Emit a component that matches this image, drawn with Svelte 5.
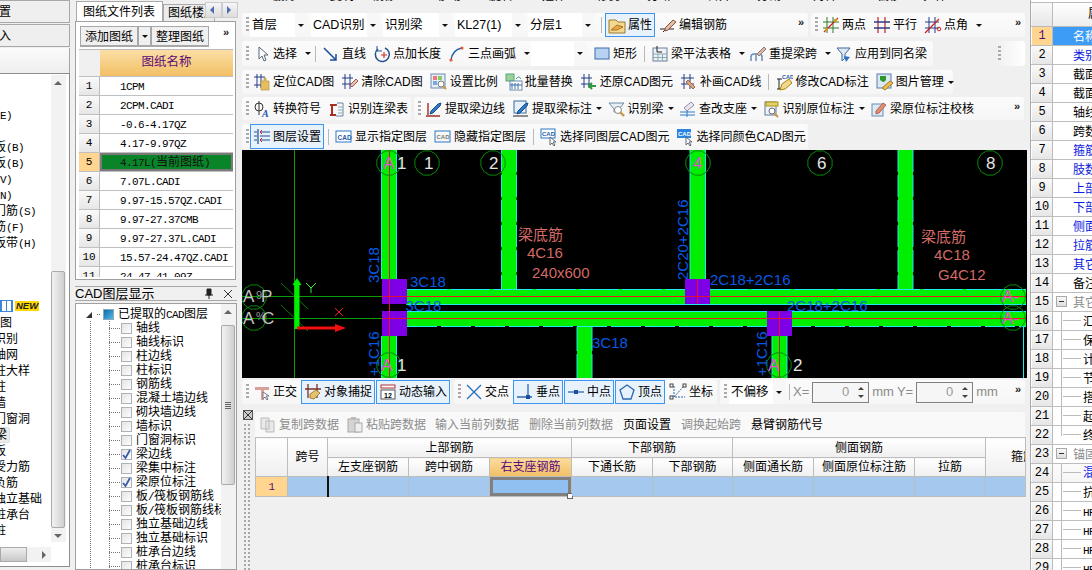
<script>
  const icons = {
    pick: `<path d="M6 2v12l3-3 2 5 2-1-2-5h4z" fill="#fff" stroke="#567"/>`,
    line: `<path d="M2 3l12 12M14 9v6H8" fill="none" stroke="#1b4f9c" stroke-width="1.5"/>`,
    plus: `<path d="M12 3a7 7 0 1 1-7 1" fill="none" stroke="#23508c" stroke-width="1.5"/><path d="M4 1v5h5" fill="none" stroke="#23508c"/><path d="M11 7v6M8 10h6" stroke="#c33" stroke-width="1.2"/>`,
    arc: `<path d="M3 15C4 8 8 4 14 3" fill="none" stroke="#1b5ea8" stroke-width="1.4"/><circle cx="3" cy="15" r="1.6" fill="#e25a3a"/><circle cx="14" cy="3" r="1.6" fill="#e25a3a"/>`,
    rect: `<rect x="2" y="3" width="14" height="11" fill="#b8d2f2" stroke="#3a6ab0"/>`,
    table: `<rect x="2" y="3" width="14" height="13" fill="#eef2f8" stroke="#6a7f9c"/><path d="M2 9h14M2 12.500h14M7 9v7M11.500 9v7" stroke="#8aa" /><path d="M6 1v6h5" fill="none" stroke="#222"/>`,
    reb: `<path d="M2 16v-4q0-3 3-3h5q3 0 3 3v4M7 9v7" fill="none" stroke="#6a8cb8" stroke-width="1.5"/><path d="M8 9l7-7 2 2-7 7z" fill="#d8b8a0" stroke="#977"/>`,
    funnel: `<path d="M2 3h13l-5 6v4l-3 3V9z" fill="#dfe8f4" stroke="#3a6a9c"/><path d="M9 11l6 1-4 5z" fill="#2f72c4"/>`,
    locate: `<path d="M4 1v14M8 1v14M1 4h11M1 12h11" stroke="#233a86" fill="none"/><path d="M8 8h3V5h2v3h3v9H8z" fill="#e3bf62" stroke="#b08a30" stroke-width=".6"/>`,
    clear: `<path d="M4 1v15M9 1v15M1 5h11M1 11h11" stroke="#233a86" fill="none"/><path d="M9 12l6-6 2 2-6 6z" fill="#e0c4b0" stroke="#a55"/>`,
    scale: `<rect x="1" y="1" width="14" height="14" fill="#e7eff8" stroke="#6e8bb0"/><rect x="3" y="3" width="4" height="4" fill="#e77"/><rect x="8" y="3" width="4" height="4" fill="#8c6"/><rect x="3" y="8" width="4" height="4" fill="#7ad"/><circle cx="11" cy="11" r="3" fill="#fff" stroke="#777"/><path d="M13 13l3 3" stroke="#c8964a" stroke-width="2"/>`,
    batch: `<rect x="1" y="1" width="8" height="7" fill="#9bd09b" stroke="#5a7"/><rect x="5" y="8" width="12" height="9" fill="#fff" stroke="#6a87a8"/><path d="M7 10v6M10 10v6M13 10v6M5 12h12" stroke="#3a70a8"/><path d="M11 6q3-4 5 0" fill="none" stroke="#3a7"/>`,
    restore: `<path d="M4 1v14M9 1v14M1 5h11M1 11h11" stroke="#233a86" fill="none"/><path d="M16 13H9m3-3l-3 3 3 3" fill="none" stroke="#2a9a3a" stroke-width="2"/>`,
    patch: `<path d="M4 1v15M10 1v15M1 5h13M1 11h13" stroke="#233a86" fill="none"/><path d="M8 7l7 7-2 2-7-7z" fill="#d8a878" stroke="#a65"/>`,
    modify: `<path d="M2 6h5M2 16h5M4 6v10" stroke="#222"/><path d="M5 17l2-6 7-5 3 4-7 6z" fill="#f0d890" stroke="#a80"/><text x="7" y="5.500" font-size="5.500" font-weight="bold" fill="#1f5aa8" font-family="Liberation Sans">CAD</text>`,
    photo: `<rect x="1" y="1" width="14" height="14" fill="#dbe8f6" stroke="#5b7ea8"/><path d="M4 3h6v4l-2 2-1 0-3-2z" fill="#2a9a2a"/><path d="M6 15l8-7 3 2-8 7z" fill="#e8c050" stroke="#a87a20"/>`,
    phi: `<circle cx="6" cy="7" r="4" fill="none" stroke="#333"/><path d="M6 1v14" stroke="#333"/><text x="9" y="17" font-size="10" font-style="italic" font-weight="bold" fill="#2456a8" font-family="Liberation Serif">A</text>`,
    lien: `<path d="M2 5h7M4 5v10M2 15h8" stroke="#a43020" stroke-width="2" fill="none"/><path d="M9 3h6v13H8" fill="#f4f7fb" stroke="#6a83a4"/><path d="M10 7h4M10 10h4M10 13h4" stroke="#8aa"/>`,
    extr: `<path d="M1 16h14M3 15V3" stroke="#a03028" stroke-width="1.4"/><path d="M6 11l7-7 3-1-1 3-7 7-3 1z" fill="#2f79c9" stroke="#1b4f8f"/>`,
    extm: `<rect x="2" y="1" width="12" height="12" fill="#e7eff8" stroke="#3a6a9c"/><path d="M1 16h15" stroke="#222"/><path d="M6 11l7-7 3-1-1 3-7 7-3 1z" fill="#2f79c9" stroke="#1b4f8f"/>`,
    iden: `<path d="M1 3h15l-5 6v3H6V9z" fill="#e7eef6" stroke="#6f8ca8"/><circle cx="10" cy="10" r="3.500" fill="#fff" stroke="#888"/><path d="M12 12l4 4" stroke="#c8964a" stroke-width="2.400"/>`,
    supp: `<path d="M1 12h15M1 15h15M8 10v7" stroke="#2c7cc8"/><path d="M5 8l7-6 3 3-7 6z" fill="#e6e8ee" stroke="#98a"/>`,
    orig: `<rect x="2" y="2" width="11" height="13" fill="#eef3f9" stroke="#5e7b9e"/><rect x="3" y="2" width="12" height="4" fill="#e2d070" stroke="#a90"/><circle cx="9" cy="11" r="3" fill="#fff" stroke="#667"/><path d="M11 13l4 4" stroke="#c8964a" stroke-width="2"/>`,
    check: `<rect x="2" y="4" width="11" height="12" fill="#dfe9f5" stroke="#6d8bb0"/><path d="M6 11l7-8 3 2-7 8-3 1z" fill="#e28f70" stroke="#a65"/>`,
    layer: `<path d="M5 1v15M1 4h3M1 8h3M1 12h3M7 4h10M7 8h10M7 12h10" stroke="#1f4c8c" fill="none" stroke-width="1.2"/><path d="M9 2l-2 2 2 2M9 10l-2 2 2 2" stroke="#c22" fill="none"/>`,
    show: `<rect x="1" y="3" width="15" height="11" fill="#fff" stroke="#2a7ac6"/><text x="2.500" y="11.500" font-size="6.500" font-weight="bold" fill="#1f5aa8" font-family="Liberation Sans">CAD</text>`,
    hide: `<rect x="1" y="3" width="15" height="11" fill="#f7f7f7" stroke="#2a7ac6"/><text x="2.500" y="11" font-size="6" fill="#777" font-weight="bold" font-family="Liberation Sans">CAD</text>`,
    samel: `<rect x="1" y="1" width="14" height="9" fill="#fff" stroke="#2a7ac6"/><text x="2" y="8" font-size="6" font-weight="bold" fill="#1f5aa8" font-family="Liberation Sans">CAD</text><path d="M10 9v8l2-2 2 3 1-1-2-3h3z" fill="#fff" stroke="#667"/>`,
    samec: `<rect x="1" y="1" width="14" height="9" fill="#2a86e0"/><text x="2" y="8" font-size="6" font-weight="bold" fill="#fff" font-family="Liberation Sans">CAD</text><path d="M10 9v8l2-2 2 3 1-1-2-3h3z" fill="#fff" stroke="#667"/>`,
    prop: `<path d="M1 4h7l2 2h7v11H1z" fill="#f4d890" stroke="#9a7a30"/><path d="M3 14l6-5 6 2-6 3z" fill="#e8a848" stroke="#a87420"/>`,
    edit: `<path d="M1 13h5M10 13h5M4 16q2-3 5-3" fill="none" stroke="#222"/><path d="M6 12l8-8 3 2-8 8-3 1z" fill="#e3b9a0" stroke="#854"/>`,
    two: `<path d="M5 1v16M11 1v16M1 6h16M1 12h16" stroke="#2f7a2f"/><path d="M2 16L16 2" stroke="#c22" stroke-width="1.200"/><rect x="3" y="12" width="3" height="3" fill="#c8a020"/><rect x="12" y="3" width="3" height="3" fill="#c8a020"/>`,
    para: `<path d="M5 1v16M12 1v16" stroke="#c83232" stroke-width="1.300"/><path d="M1 6h16M1 12h16" stroke="#2a3f86" stroke-width="1.300"/>`,
    ang: `<path d="M5 1v16M11 1v16M1 6h14M1 12h14" stroke="#233a86"/><path d="M1 17L15 3" stroke="#c22" stroke-width="1.200"/><circle cx="15" cy="13" r="1.800" fill="none" stroke="#c22"/>`,
    ortho: `<path d="M2 4h14v3H11v10H8V7H2z" fill="#d9a09a"/><path d="M10 9v7l2-2 2 3 1-1-2-3h3z" fill="#fff" stroke="#778"/>`,
    snap: `<path d="M4 1v14M13 1v14M1 6h16" stroke="#7a3020" stroke-width="1.300"/><path d="M6 11l6-4 4 3-6 6-4-1z" fill="#e3c370" stroke="#a88030"/>`,
    dyn: `<rect x="2" y="2" width="14" height="3" fill="#fff" stroke="#a33"/><rect x="2" y="7" width="14" height="9" fill="#fff" stroke="#555"/><text x="5" y="14.500" font-size="7" font-family="Liberation Sans" font-weight="bold">12</text>`,
    cross: `<path d="M2 2l14 14M16 2L2 16" stroke="#2170c0" stroke-width="1.300"/>`,
    perp: `<path d="M12 1v13M1 14h15" stroke="#2a68b0" stroke-width="1.300"/><rect x="10" y="12" width="4" height="4" fill="#1a4f98"/>`,
    mid: `<path d="M1 9h16" stroke="#2a68b0" stroke-width="1.300"/><rect x="7" y="7" width="4" height="4" fill="#1a4f98"/>`,
    apex: `<path d="M9 2l7 5-3 9H5L2 7z" fill="none" stroke="#2a68b0" stroke-width="1.300"/>`,
    coord: `<path d="M5 3v11h11" stroke="#2a68b0" fill="none" stroke-dasharray="2 1"/><path d="M5 14L15 3" stroke="#2a68b0" stroke-dasharray="2 1"/><rect x="1" y="1" width="3" height="3" fill="none" stroke="#444"/><rect x="14" y="1" width="3" height="3" fill="none" stroke="#444"/><rect x="1" y="13" width="3" height="3" fill="none" stroke="#444"/>`,
    copy: `<path d="M2 2h8v11H2zM7 5h8v11H7z" fill="#e8e8e8" stroke="#bbb"/>`,
    paste: `<rect x="2" y="3" width="11" height="13" fill="#d4d4d4" stroke="#aaa"/><rect x="9" y="7" width="7" height="9" fill="#eee" stroke="#aaa"/><rect x="5" y="1" width="5" height="3" fill="#bbb"/>`
  };

  const it = (i, l, a) => ({ i, l, a });
  const on = (i, l) => ({ i, l, on: true });
  const sep = { sep: true };
  const more = { more: true };
  const combo = (combo, w) => ({ combo, w });

  const rows = [
    [
      { w: 566, items: [combo('首层', 58), combo('CAD识别', 69), combo('识别梁', 69), combo('KL27(1)', 70), combo('分层1', 67), sep, on('prop', '属性'), it('edit', '编辑钢筋'), more] },
      { w: 214, items: [it('two', '两点'), it('para', '平行'), it('ang', '点角', 1), more] }
    ],
    [
      { w: 691, items: [it('pick', '选择', 1), sep, it('line', '直线'), it('plus', '点加长度'), it('arc', '三点画弧', 1), combo('', 56), it('rect', '矩形'), sep, it('table', '梁平法表格', 1), it('reb', '重提梁跨', 1), it('funnel', '应用到同名梁')] },
      { w: 31, push: 58, items: [] }
    ],
    [
      { w: 711, items: [it('locate', '定位CAD图'), it('clear', '清除CAD图'), it('scale', '设置比例'), it('batch', '批量替换'), it('restore', '还原CAD图元'), it('patch', '补画CAD线'), sep, it('modify', '修改CAD标注'), it('photo', '图片管理', 2)] }
    ],
    [
      { w: 169, items: [it('phi', '转换符号'), it('lien', '识别连梁表')] },
      { w: 610, items: [it('extr', '提取梁边线'), it('extm', '提取梁标注', 2), it('iden', '识别梁', 2), it('supp', '查改支座', 2), it('orig', '识别原位标注', 2), it('check', '梁原位标注校核'), more] }
    ],
    [
      { w: 566, items: [on('layer', '图层设置'), sep, it('show', '显示指定图层'), it('hide', '隐藏指定图层'), sep, it('samel', '选择同图层CAD图元'), it('samec', '选择同颜色CAD图元')] }
    ]
  ];

  const snapA = [it('ortho', '正交'), on('snap', '对象捕捉'), on('dyn', '动态输入')];
  const snapB = [it('cross', '交点'), on('perp', '垂点'), on('mid', '中点'), on('apex', '顶点'), it('coord', '坐标')];

  const clipped = [
    ['删除', 273], ['复制', 330], ['镜像', 372], ['移动', 437], ['旋转', 489], ['延伸', 542],
    ['修剪', 597], ['打断', 647], ['合并', 707], ['分割', 757], ['对齐', 813], ['偏移', 877], ['拉伸', 923]
  ];

  const leftA = ['(E)', '', '板(B)', '板(B)', '(V)', '(N)', '门筋(S)', '筋(F)', '板带(H)'];
  const leftB = ['识别', '轴网', '柱大样', '柱', '墙', '门窗洞', '梁', '板', '受力筋', '负筋', '独立基础', '桩承台', '桩'];

  const sheets = ['1CPM', '2CPM.CADI', '-0.6-4.17QZ', '4.17-9.97QZ', '4.17L(当前图纸)', '7.07L.CADI', '9.97-15.57QZ.CADI', '9.97-27.37CMB', '9.97-27.37L.CADI', '15.57-24.47QZ.CADI', '24.47-41.09Z'];
  const layers = [
    ['轴线'], ['轴线标识'], ['柱边线'], ['柱标识'], ['钢筋线'], ['混凝土墙边线'], ['砌块墙边线'], ['墙标识'], ['门窗洞标识'],
    ['梁边线', 1], ['梁集中标注'], ['梁原位标注', 1], ['板/筏板钢筋线'], ['板/筏板钢筋线标识'], ['独立基础边线'], ['独立基础标识'], ['桩承台边线'], ['桩承台标识']
  ];
  const props = [
    ['名称属性', 'sel'], ['类别', 'b'], ['截面宽度', ''], ['截面高度', ''], ['轴线距', ''], ['跨数量', ''], ['箍筋', 'b'], ['肢数', 'b'],
    ['上部通长', 'b'], ['下部通长', 'b'], ['侧面构造', 'b'], ['拉筋', 'b'], ['其它箍筋', 'b'], ['备注', ''],
    ['其它属性', 'g'], ['汇总信息', 't'], ['保护层', 't'], ['计算设置', 't'], ['节点设置', 't'], ['搭接设置', 't'], ['起点标高', 't'], ['终点标高', 't'],
    ['锚固搭接', 'g'], ['混凝土', 'tb'], ['抗震等级', 't'], ['HPB235', 't'], ['HRB335', 't'], ['HRB400', 't'], ['HPB300', 't']
  ];

  const split = (s) => s.split(/([\x00-\x7f]+)/).filter(Boolean).map((t) => ({ t, m: /^[\x00-\x7f]/.test(t) }));

  const oct = (cx, cy, r = 12.500) =>
    Array.from({ length: 12 }, (_, i) => {
      const a = ((i + 0.5) * Math.PI) / 6;
      return `${(cx + r * Math.cos(a)).toFixed(1)},${(cy + r * Math.sin(a)).toFixed(1)}`;
    }).join(' ');
  const rings = [[389, 163], [427, 163], [493, 163], [698, 163], [820, 163], [990, 163], [389, 365], [779, 365], [254, 297], [254, 318], [1013, 297], [1013, 318]];
  const greens = [
    [381.500, 150, 15, 129], [381.500, 336, 15, 42], [501.500, 150, 15, 140], [577, 326, 15, 52],
    [690, 150, 15, 129], [772, 336, 15, 42], [898, 150, 15, 140], [406, 289, 620, 16], [406, 311, 620, 15]
  ];
  const purples = [[382, 279], [382, 311], [685, 279], [767, 311]];
  const blues = [
    ['3C18', 410, 287], ['3C18', 405.500, 311], ['3C18', 592, 348], ['2C18+2C16', 710, 285], ['2C18+2C16', 787, 311]
  ];
  const vblues = [['3C18', 379, 283], ['+1C16', 379, 376], ['2C20+2C16', 688, 280], ['+1C16', 767, 376]];
  const pinks = [['梁底筋', 518, 240], ['4C16', 527, 258], ['240x600', 532, 278], ['梁底筋', 921, 242], ['4C18', 934, 260], ['G4C12', 938, 280]];
  const whites = [['1', 424, 169], ['2', 489, 169], ['6', 817, 169], ['8', 986, 169], ['1', 397, 169], ['1', 397, 371], ['2', 793, 371]];
  const mags = [['A', 383, 169], ['A', 381, 371], ['4', 693, 169], ['A', 768, 371], ['A-', 1002, 302], ['A-', 1002, 324]];
</script>

{#snippet txt(s)}
  {#each split(s) as p}{#if p.m}<span class="m">{p.t}</span>{:else}{p.t}{/if}{/each}
{/snippet}

{#snippet ico(name)}
  <svg class="ico" viewBox="0 0 18 18" width="18" height="18">{@html icons[name]}</svg>
{/snippet}

{#snippet tool(t)}
  {#if t.sep}
    <span class="sep"></span>
  {:else if t.more}
    <span class="more">»</span>
  {:else if t.combo !== undefined}
    <span class="combo" style="width:{t.w}px"><span class="cv">{t.combo}</span><span class="cb"><i class="caret"></i></span></span>
  {:else}
    <span class="tool" class:on={t.on}>
      {@render ico(t.i)}<span>{t.l}</span>{#if t.a}<i class="caret c{t.a}"></i>{/if}
    </span>
  {/if}
{/snippet}

<div class="app">
  <aside class="nav">
    <div class="navbtn"><span class="nb">设置</span></div>
    <div class="navbtn"><span class="nb">导入</span></div>
    <div class="navblank"></div>
    <div class="navtree">
      <div class="navlist">
        <div class="gapA"></div>
        {#each leftA as l}<div class="nl">{#if l}<span class="off">{@render txt(l)}</span>{/if}</div>{/each}
        <div class="gapB"></div>
        <div class="nl new"><span class="flat"></span><span class="newtag">NEW</span></div>
        <div class="nl"><span>图</span></div>
        {#each leftB as l, i}<div class="nl"><span class="off" class:sel={i === 6}>{l}</span></div>{/each}
      </div>
      <div class="vbar">
        <span class="arr up"></span>
        <span class="thumb nthumb"></span>
        <span class="arr dn"></span>
      </div>
      <div class="hbar"><span class="hthumb"></span><span class="arr rt"></span></div>
    </div>
  </aside>

  <section class="draw">
    <div class="tabs">
      <span class="tab act">图纸文件列表</span>
      <span class="tab two">图纸楼层构件</span>
      <span class="navs"><b class="lt"></b><b class="rt2"></b></span>
    </div>
    <div class="sheetbox">
      <div class="sheettool">
        <span class="stb">添加图纸</span><span class="stc"><i class="caret"></i></span><span class="stb">整理图纸</span>
        <span class="more">»</span>
      </div>
      <div class="sheethead"><span class="corner"></span><span class="shname">图纸名称</span></div>
      <div class="sheetbody">
        {#each sheets as s, i}
          <div class="sr" class:cur={i === 4}>
            <span class="sn">{i + 1}</span>
            <span class="st"><span class="stx">{@render txt(s)}</span></span>
          </div>
        {/each}
      </div>
    </div>

    <div class="ltitle"><span class="lt1">CAD图层显示</span>
      <svg class="pin" viewBox="0 0 10 12" width="10" height="12"><path d="M3 1h4v6H3zM1 7h8M5 7v4" fill="#222" stroke="#222"/></svg>
      <svg class="xx" viewBox="0 0 10 10" width="10" height="10"><path d="M1 1l8 8M9 1L1 9" stroke="#333"/></svg>
    </div>
    <div class="ltree">
      <div class="llist">
        <div class="lroot">
          <i class="tri"></i><span class="dots"></span><span class="rootbox"></span><span>已提取的<span class="m">CAD</span>图层</span>
        </div>
        {#each layers as [n, c]}
          <div class="ln">
            <span class="lcb">{#if c}<svg viewBox="0 0 11 11" width="11" height="11"><path d="M2 6l2.500 3L9 1" fill="none" stroke="#3a5aa8" stroke-width="1.800"/></svg>{/if}</span>
            <span class="ltx">{@render txt(n)}</span>
          </div>
        {/each}
      </div>
      <div class="vbar lbar">
        <span class="arr up"></span>
        <span class="thumb lthumb"><span class="lines"></span></span>
      </div>
    </div>
  </section>

  <main class="main">
    <div class="cliprow">
      {#each clipped as [l, x], i}
        <span class="ct" style="left:{x - 242}px">{l}</span>
      {/each}
    </div>

    <div class="bars">
      {#each rows as row, ri}
        <div class="row r{ri + 1}">
          {#each row as tb}
            <div class="tb" class:empty={tb.items.length === 0} style="width:{tb.w}px;margin-left:{tb.push ?? 0}px">
              <span class="grip"></span>
              {#each tb.items as t}{@render tool(t)}{/each}
            </div>
          {/each}
        </div>
      {/each}
    </div>

    <svg class="cad" viewBox="242 150 785 228" width="785" height="228">
      <rect x="242" y="150" width="785" height="228" fill="#000" />
      <line x1="294.500" y1="150" x2="294.500" y2="378" stroke="#0a9a0a" />
      <path d="M242 296.500H1026M242 318.500H1026" stroke="#0a9a0a" />
      {#each greens as [x, y, w, h]}<rect {x} {y} width={w} height={h} fill="#00ee00" />{/each}
      <g stroke="#22e8f0" fill="none">
        <path d="M381.500 150V279M396.500 150V279M381.500 336V378M396.500 336V378" />
        <path d="M501.500 150V289M516.500 150V289" stroke-dasharray="22 3" />
        <path d="M577 327V378M592 327V378" stroke-dasharray="24 3" />
        <path d="M690 150V279M705.500 150V279M772 336V378M787 336V378" />
        <path d="M898 150V289M913 150V289" stroke-dasharray="22 3" />
        <path d="M407 289.500H1026" stroke-dasharray="40 3" />
        <path d="M407 304.500H1026M407 311.500H1026" />
        <path d="M407 326.500H1026" stroke-dasharray="30 4" />
        <path d="M1023.500 326V378" />
      </g>
      <path d="M407 296.500H1026M407 318.500H1026" stroke="#f01818" />
      <path d="M389.500 150V378M779.500 336V378" stroke="#c02020" />
      {#each purples as [x, y]}<rect {x} {y} width="25" height="25" fill="#7d00e6" />{/each}
      <path d="M389.500 279V336M697.500 279V304M779.500 311V336M382 296.500H407M382 318.500H407M685 296.500H710M767 318.500H792" stroke="#e01030" />
      <path d="M281 283l27 26M281 305l27 26" stroke="#0a7a0a" />
      {#each rings as [x, y]}<polygon points={oct(x, y)} fill="none" stroke="#0a8a0a" />{/each}
      <path d="M297 329V283" stroke="#00ee00" stroke-width="5" />
      <path d="M292.500 285L297 278l4.500 7z" fill="#00ee00" />
      <path d="M297 328H336" stroke="#f01010" stroke-width="3" />
      <path d="M335 324l11 4-11 4z" fill="#f01010" />
      <path d="M306 283l5 5 5-5M311 288v5" stroke="#33ee33" fill="none" />
      <path d="M335 308l8 8M343 308l-8 8" stroke="#ee2020" />
      <g class="cadtext">
        {#each blues as [t, x, y]}<text {x} {y} fill="#0a58e0">{t}</text>{/each}
        {#each vblues as [t, x, y]}<text {x} {y} fill="#0a58e0" transform="rotate(-90 {x} {y})">{t}</text>{/each}
        {#each pinks as [t, x, y]}<text {x} {y} fill="#d26a66">{t}</text>{/each}
        {#each whites as [t, x, y]}<text {x} {y} fill="#e4e4e4" class="big">{t}</text>{/each}
        {#each mags as [t, x, y]}<text {x} {y} fill="#e050d0" class="big">{t}</text>{/each}
        <text x="243" y="302" fill="#c4c4c4" class="big">A</text>
        <text x="256" y="299" fill="#9a9a9a" class="tiny">9</text>
        <text x="261" y="302" fill="#c4c4c4" class="big">P</text>
        <text x="243" y="324" fill="#c4c4c4" class="big">A</text>
        <text x="256" y="320" fill="#9a9a9a" class="tiny">%</text>
        <text x="262" y="324" fill="#c4c4c4" class="big">C</text>
      </g>
    </svg>

    <div class="snap">
      <div class="tb sa"><span class="grip"></span>{#each snapA as t}{@render tool(t)}{/each}</div>
      <div class="tb sb"><span class="grip"></span>{#each snapB as t}{@render tool(t)}{/each}</div>
      <div class="tb sc">
        <span class="grip"></span>
        <span class="combo cw"><span class="cv">不偏移</span><span class="cb"><i class="caret"></i></span></span>
        <span class="sep"></span>
        <span class="gr xl">X=</span>
        <span class="spin"><span class="sv">0</span><span class="ud"><i class="up2"></i><i class="dn2"></i></span></span>
        <span class="gr mm">mm</span>
        <span class="gr yl">Y=</span>
        <span class="spin"><span class="sv">0</span><span class="ud"><i class="up2"></i><i class="dn2"></i></span></span>
        <span class="gr mm">mm</span>
        <span class="more">»</span>
      </div>
    </div>

    <div class="lower">
      <div class="gutter">
        <svg viewBox="0 0 10 10" width="10" height="10"><rect x=".5" y=".5" width="9" height="9" fill="#ccc" stroke="#555"/><path d="M1 1l8 8M9 1L1 9" stroke="#333"/></svg>
        <span class="gdots"></span>
      </div>
      <div class="gridwrap">
        <div class="lowtool">
          <span class="lt-i dim">{@render ico('copy')}复制跨数据</span>
          <span class="lt-i dim">{@render ico('paste')}粘贴跨数据</span>
          <span class="lt-t dim">输入当前列数据</span>
          <span class="lt-t dim">删除当前列数据</span>
          <span class="lt-t">页面设置</span>
          <span class="lt-t dim">调换起始跨</span>
          <span class="lt-t">悬臂钢筋代号</span>
        </div>
        <table class="grid">
          <colgroup>
            <col style="width:32px"><col style="width:40px"><col style="width:81px"><col style="width:81px"><col style="width:82px"><col style="width:81px"><col style="width:80px"><col style="width:81px"><col style="width:101px"><col style="width:71px"><col style="width:40px">
          </colgroup>
          <thead>
            <tr>
              <th rowspan="2"></th>
              <th rowspan="2">跨号</th>
              <th colspan="3">上部钢筋</th>
              <th colspan="2">下部钢筋</th>
              <th colspan="3">侧面钢筋</th>
              <th rowspan="2" class="clip"><span class="clipin">箍筋</span></th>
            </tr>
            <tr class="h2">
              <th>左支座钢筋</th><th>跨中钢筋</th><th class="hot">右支座钢筋</th><th>下通长筋</th><th>下部钢筋</th><th>侧面通长筋</th><th>侧面原位标注筋</th><th>拉筋</th>
            </tr>
          </thead>
          <tbody>
            <tr>
              <td class="num"><span class="m">1</span></td>
              <td class="d"></td>
              <td class="d caretcell"></td>
              <td class="d"></td>
              <td class="d cursor"><span class="handle"></span></td>
              <td class="d"></td><td class="d"></td><td class="d"></td><td class="d"></td><td class="d"></td><td class="d"></td>
            </tr>
          </tbody>
        </table>
      </div>
    </div>
  </main>

  <aside class="props">
    <div class="ph"><span class="pn"></span><span class="phc">属性名称</span></div>
    {#each props as [l, k], i}
      <div class="pr">
        <span class="pn" class:pnsel={i === 0}>{i + 1}</span>
        <span class="pc {k}">
          {#if k === 'g'}<span class="minus"></span>{/if}
          {#if k === 't' || k === 'tb'}<span class="tl" class:tend={i === 21}></span>{/if}
          <span class="pt">{@render txt(l)}</span>
        </span>
      </div>
    {/each}
  </aside>
</div>

<style>
  :global(body) { margin: 0; background: #f0f0f0; }
  .app {
    width: 1092px; height: 570px; overflow: hidden;
    display: grid; grid-template-columns: 75px 167px 788px 62px;
    font: 12px/14px "Liberation Sans", "Noto Sans CJK SC", sans-serif; color: #000; background: #f0f0f0;
  }
  .m { font-family: "Liberation Mono", monospace; font-size: 11px; letter-spacing: -0.6px; }

  /* left navigation */
  .nav { width: 70px; height: 570px; display: flex; flex-direction: column; overflow: hidden; }
  .navbtn { height: 21px; margin-bottom: 1px; border: 1px solid #a8a8a8; border-left: 0; background: #efefef; display: flex; align-items: center; overflow: hidden; }
  .nb { margin-left: -13px; }
  .navblank { height: 25px; background: linear-gradient(#fbfbfb, #eeeeee); border-right: 1px solid #a8a8a8; }
  .navtree { position: relative; height: 492px; border: 1px solid #8e8e8e; border-left: 0; background: #fff; }
  .navlist { width: 51px; height: 472px; overflow: hidden; }
  .gapA { height: 33px; }
  .gapB { height: 45px; }
  .nl { height: 16px; line-height: 16px; white-space: nowrap; display: flex; align-items: center; }
  .off { margin-left: -6px; }
  .off.sel { background: #ececec; border: 1px solid #ddd; border-radius: 2px; padding-right: 2px; line-height: 14px; }
  .nl.new { height: 19px; }
  .flat { width: 13px; height: 12px; background: repeating-linear-gradient(90deg, #3b88d8 0 1px, #fff 1px 5px); border: 1px solid #3b88d8; box-sizing: border-box; }
  .newtag { font: bold italic 9.500px/10px "Liberation Sans", sans-serif; background: #ffd800; color: #222; margin-left: 2px; padding: 0 1px; }
  .vbar { position: absolute; left: 51px; top: 1px; width: 15px; bottom: 24px; background: #f2f2f2; }
  .arr { position: absolute; width: 0; height: 0; border: 4px solid transparent; }
  .arr.up { top: 6px; left: 3px; border-bottom-color: #666; border-top: 0; }
  .arr.dn { bottom: 4px; left: 3px; border-top-color: #666; border-bottom: 0; }
  .arr.rt { right: 5px; top: 4px; border-left-color: #666; border-right: 0; }
  .thumb { position: absolute; left: 0; width: 14px; box-sizing: border-box; border: 1px solid #aaa; border-radius: 2px; background: linear-gradient(90deg, #f2f2f2, #cfcfcf); }
  .nthumb { top: 196px; height: 257px; }
  .hbar { position: absolute; left: 0; width: 51px; bottom: 4px; height: 15px; background: #f2f2f2; }
  .hthumb { display: block; width: 27px; height: 15px; box-sizing: border-box; border: 1px solid #aaa; background: linear-gradient(#eee, #c8c8c8); }

  /* drawing list + layers */
  .draw { width: 163px; height: 570px; display: flex; flex-direction: column; overflow: hidden; }
  .tabs { height: 21px; position: relative; display: flex; align-items: flex-end; white-space: nowrap; overflow: hidden; padding-left: 1px; }
  .tab { box-sizing: border-box; height: 20px; line-height: 20px; padding: 0 6px; border: 1px solid #aaa; border-bottom: 0; }
  .tab.act { background: #fff; width: 87px; z-index: 1; height: 20px; }
  .tab.two { width: 52px; height: 17px; line-height: 17px; background: #ececec; overflow: hidden; padding-left: 4px; }
  .navs { position: absolute; left: 130px; top: 2px; width: 33px; height: 16px; background: #f0f0f0; display: flex; }
  .navs b { flex: 1; background: linear-gradient(#f6f6f6, #dcdcdc); border: 1px solid #ccc; position: relative; }
  .lt::after, .rt2::after { content: ""; position: absolute; top: 3px; left: 4px; border: 4px solid transparent; }
  .lt::after { border-right-color: #4a6fb0; border-left: 0; }
  .rt2::after { border-left-color: #4a6fb0; border-right: 0; }
  .sheetbox { width: 161px; height: 259px; box-sizing: border-box; border: 1px solid #a0a0a0; background: #fff; overflow: hidden; }
  .sheettool { height: 27px; padding: 4px 0 0 4px; box-sizing: border-box; display: flex; background: #fff; }
  .stb, .stc { height: 21px; line-height: 20px; box-sizing: border-box; border: 1px solid #a8a8a8; border-bottom-width: 2px; background: #f0f0f0; }
  .stb { padding: 0 4px; }
  .stc { width: 13px; display: flex; align-items: center; justify-content: center; }
  .stc .caret { margin: 0; }
  .sheettool .more { margin-left: 14px; margin-top: -3px; }
  .sheethead { height: 26px; display: flex; border-top: 1px solid #bbb; margin: 0 2px 0 3px; }
  .corner { width: 21px; background: #f0f0f0; }
  .shname { flex: 1; text-align: center; line-height: 24px; font-size: 12.5px; color: #5c0a78; background: linear-gradient(#fbdfa6, #f2bf65); }
  .sheetbody { height: 201px; overflow: hidden; margin: 0 2px 0 3px; }
  .sr { height: 19px; display: flex; box-sizing: border-box; border-top: 1px solid #c0c0c0; }
  .sn { width: 21px; text-align: center; line-height: 19px; background: linear-gradient(#fafafa, #e6e6e6); border-right: 1px solid #bbb; box-sizing: border-box; font-family: "Liberation Mono", monospace; font-size: 11px; }
  .st { flex: 1; padding-left: 0; line-height: 19px; white-space: nowrap; overflow: hidden; }
  .stx { margin-left: 20px; display: inline-block; }
  .cur .sn { background: #ffd58f; }
  .cur .st { background: #0a8428; box-shadow: inset 0 0 0 2px #7a7a7a; color: #111; }
  .ltitle { height: 15px; margin-top: 6px; width: 162px; display: flex; align-items: center; position: relative; border: 1px solid #a8a8a8; border-width: 1px 0; box-sizing: border-box; }
  .lt1 { margin-left: 0; font-size: 13px; }
  .pin { margin-left: auto; margin-right: 9px; }
  .xx { margin-right: 4px; }
  .ltree { margin-top: 2px; position: relative; flex: 1; width: 162px; box-sizing: border-box; border: 1px solid #a0a0a0; background: #fff; overflow: hidden; }
  .llist { width: 146px; overflow: hidden; padding-top: 3px; }
  .lroot { height: 14px; display: flex; align-items: center; white-space: nowrap; }
  .tri { width: 0; height: 0; border: 3px solid transparent; border-right-color: #333; border-bottom-color: #333; margin-left: 10px; margin-top: 2px; }
  .dots { width: 4px; height: 1px; margin: 0 2px 0 5px; background: repeating-linear-gradient(90deg, #666 0 1px, transparent 1px 2px); }
  .rootbox { width: 11px; height: 11px; margin-right: 4px; background: linear-gradient(135deg, #0f6ca8, #58b8e8); border: 1px solid #8ab; box-sizing: border-box; }
  .ln {
    height: 14px; display: flex; align-items: center; white-space: nowrap; padding-left: 45px;
    background:
      repeating-linear-gradient(#777 0 1px, transparent 1px 2px) 14px 0 / 1px 100% no-repeat,
      repeating-linear-gradient(#777 0 1px, transparent 1px 2px) 33px 0 / 1px 100% no-repeat,
      repeating-linear-gradient(90deg, #777 0 1px, transparent 1px 2px) 33px 7px / 12px 1px no-repeat;
  }
  .lcb { flex: none; width: 11px; height: 11px; box-sizing: border-box; border: 1px solid #aeb2b8; background: linear-gradient(135deg, #e4e4e4, #fdfdfd); margin-right: 4px; display: flex; }
  .lcb svg { margin: -1px; }
  .lbar { left: auto; right: 0; top: 0; bottom: 0; }
  .lthumb { top: 21px; height: 160px; }
  .lines { position: absolute; left: 3px; right: 3px; top: 76px; height: 8px; background: repeating-linear-gradient(#666 0 1px, transparent 1px 2px); }

  /* main column */
  .main { width: 788px; display: flex; flex-direction: column; min-width: 0; }
  .cliprow { position: relative; height: 8px; overflow: hidden; flex: none; }
  .ct { position: absolute; bottom: 5px; }
  .bars { flex: none; }
  .row { display: flex; gap: 3px; height: 24px; }
  .r1 { margin-top: 5px; }
  .r2 { margin-top: 4px; height: 25px; }
  .r3 { margin-top: 4px; height: 24px; }
  .r4 { margin-top: 3px; height: 23px; }
  .r5 { margin-top: 4px; height: 25px; }
  .tb {
    flex: none; display: flex; align-items: center; box-sizing: border-box; padding-left: 4px;
    border-radius: 3px; white-space: nowrap; background: linear-gradient(#fbfbfb, #f6f6f6);
  }
  .grip { flex: none; width: 3px; height: 16px; margin-right: 1px; background: repeating-linear-gradient(#aaa 0 2px, transparent 2px 4px); }
  .sep { flex: none; width: 1px; height: 16px; background: #b8b8b8; margin: 0 3px; }
  .tool { display: inline-flex; align-items: center; gap: 2px; box-sizing: border-box; height: 100%; padding: 0 2px; border: 1px solid transparent; margin-right: 1px; }
  .tool.on { background: #e8f2fc; border-color: #3a96f0; }
  .ico { flex: none; }
  .caret { display: inline-block; flex: none; width: 0; height: 0; border: 3px solid transparent; border-top-color: #111; border-bottom: 0; }
  .c1 { margin: 0 -3px 0 6px; }
  .c2 { margin: 0 -1.500px 0 2px; }
  .combo { flex: none; height: 24px; margin: 0 3px 0 0; display: inline-flex; background: #fff; box-sizing: border-box; }
  .cv { flex: 1; padding-left: 2px; line-height: 24px; font-size: 12.500px; overflow: hidden; }
  .cb { flex: none; width: 13px; background: #f7f7f7; display: flex; align-items: center; }
  .cb .caret { margin: 0 3px; }
  .more { margin-left: auto; margin-right: 4px; align-self: flex-start; font: bold 11px/14px "Liberation Sans", sans-serif; padding-top: 2px; color: #222; }
  .empty { background: linear-gradient(90deg, #efefef, #fff); }

  .cad { display: block; flex: none; margin-top: 1px; }
  .cadtext text { font: 15px "Liberation Sans", "Noto Sans CJK SC", sans-serif; }
  .cadtext .big { font-size: 17px; }
  .cadtext .tiny { font-size: 11px; }

  .snap { flex: none; display: flex; gap: 3px; height: 24px; margin-top: 2px; }
  .sa { width: 209px; }
  .sb { width: 263px; }
  .sc { width: 305px; }
  .cw { width: 57px; margin: 0 0 0 1px; }
  .gr { color: #8a8a8a; font-size: 13px; }
  .xl { margin-right: 3px; }
  .yl { margin: 0 3px 0 3px; }
  .mm { margin-left: 3px; }
  .spin { flex: none; width: 57px; height: 21px; box-sizing: border-box; border: 1px solid #808080; background: #f6f6f6; display: flex; align-items: center; }
  .sv { flex: 1; text-align: right; color: #999; font-size: 13px; padding-right: 5px; }
  .ud { width: 14px; display: flex; flex-direction: column; align-items: center; gap: 5px; }
  .up2, .dn2 { width: 0; height: 0; border: 3px solid transparent; }
  .up2 { border-bottom-color: #444; border-top: 0; }
  .dn2 { border-top-color: #444; border-bottom: 0; }

  .lower { flex: 1; display: flex; margin-top: 6px; min-height: 0; }
  .gutter { flex: none; width: 13px; display: flex; flex-direction: column; padding-left: 1px; box-sizing: border-box; }
  .gdots { flex: 1; width: 8px; margin-top: 3px; background: radial-gradient(#aaa 1px, transparent 1px) 0 0 / 4px 4px; }
  .gridwrap { flex: none; width: 770px; }
  .lowtool { height: 25px; margin-top: 2px; display: flex; align-items: center; background: #f9f9f9; border-radius: 3px 3px 0 0; padding-left: 4px; }
  .lt-i { display: inline-flex; align-items: center; gap: 2px; margin-right: 7px; }
  .lt-t { margin-left: 2px; margin-right: 8px; }
  .dim { color: #8c8c8c; }
  .grid { border-collapse: collapse; table-layout: fixed; width: 770px; background: #fff; border: 1px solid #bdbdbd; margin-top: 0; }
  .grid th { height: 19px; padding: 0; font-weight: normal; font-size: 12px; border: 1px solid #bdbdbd; background: linear-gradient(#fff, #efefef); white-space: nowrap; overflow: hidden; }
  .grid .h2 th { height: 18px; }
  .grid th.hot { background: linear-gradient(#fbdc9e, #f2bf65); color: #5c0a78; }
  .clip { text-align: left; }
  .clipin { margin-left: 25px; }
  .grid td { height: 19px; padding: 0; border: 1px solid #bdbdbd; position: relative; }
  .grid .num { background: #ffd58f; text-align: center; color: #5c0a78; }
  .grid .d { background: #a4c8ee; }
  .caretcell { border-left: 2px solid #111 !important; }
  .grid .cursor { background: #90c0f2; box-shadow: inset 0 0 0 3px #808080; }
  .handle { position: absolute; right: -2px; bottom: -3px; width: 4px; height: 4px; background: #fff; border: 1px solid #666; }

  /* right properties */
  .props { width: 62px; height: 570px; overflow: hidden; border-left: 1px solid #aaa; box-sizing: border-box; background: #fff; }
  .ph { height: 25px; display: flex; border-top: 1px solid #bbb; border-bottom: 1px solid #bbb; margin-top: 2px; box-sizing: border-box; background: linear-gradient(#fff, #eee); overflow: hidden; white-space: nowrap; }
  .phc { margin-left: 35px; line-height: 22px; }
  .pr { height: 19px; display: flex; box-sizing: border-box; border-bottom: 1px solid #bdbdbd; overflow: hidden; white-space: nowrap; }
  .pn { flex: none; width: 21px; margin-left: 1px; box-sizing: border-box; text-align: center; line-height: 19px; background: linear-gradient(#fafafa, #e6e6e6); border-right: 1px solid #bbb; font-family: "Liberation Mono", monospace; font-size: 12px; }
  .pn.pnsel { background: #ffd58f; color: #5c0a78; }
  .pc { flex: 1; position: relative; line-height: 20px; padding-left: 20px; min-width: 0; }
  .pc.sel { background: #3d9cf6; color: #fff; margin-left: 0; }
  .pc.b { color: #0a20e0; }
  .pc.g { padding-left: 20px; color: #8a8a8a; }
  .pc.t, .pc.tb { padding-left: 30px; }
  .pc.tb { color: #0a20e0; }
  .minus { position: absolute; left: 3px; top: 3px; width: 11px; height: 11px; box-sizing: border-box; border: 1px solid #aaa; background: linear-gradient(#f8f8f8, #ddd); }
  .minus::after { content: ""; position: absolute; left: 2px; right: 2px; top: 4px; height: 1px; background: #333; }
  .tl { position: absolute; left: 8px; top: -1px; bottom: -1px; width: 19px; border-left: 1px solid #bbb; background: linear-gradient(#bbb, #bbb) 1px 9px / 18px 1px no-repeat; }
  .tend { bottom: 8px; }
</style>
